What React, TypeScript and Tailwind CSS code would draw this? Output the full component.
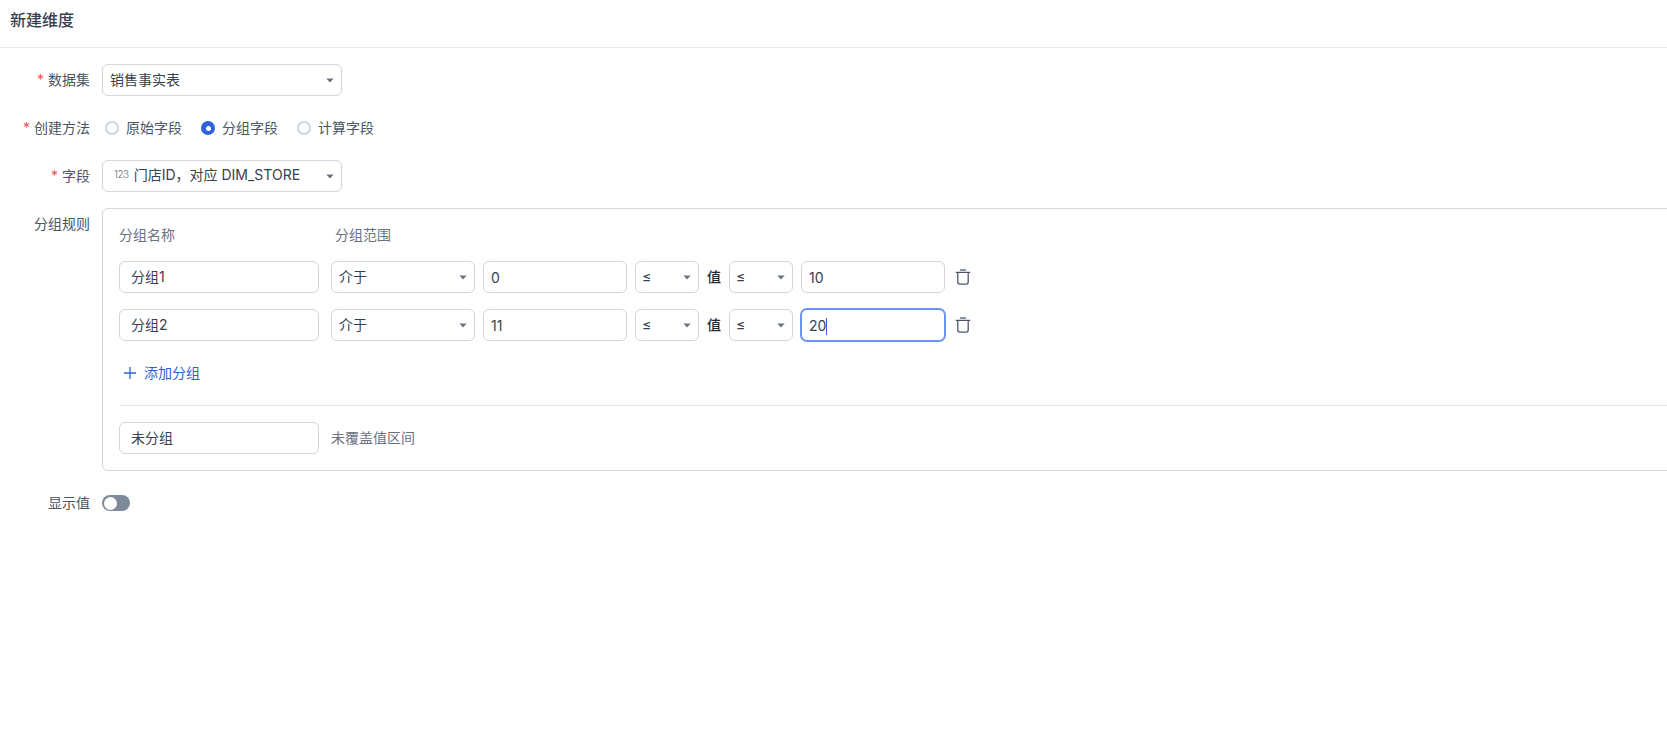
import React from "react";

const font = "font-['Inter','Noto_Sans_CJK_SC',sans-serif]";

function Caret() {
  return (
    <svg width="8" height="5" viewBox="0 0 8 5" className="shrink-0">
      <path d="M0.3 0.5 H7.7 L4 4.5 Z" fill="#6b7280" />
    </svg>
  );
}

function Select({ w, children }: { w: string; children: React.ReactNode }) {
  return (
    <div className={`${w} h-8 shrink-0 flex items-center justify-between pl-[7px] pr-[7px] bg-white border border-[#cfd6e0] rounded-md text-sm text-[#374151]`}>
      <span className="flex items-center min-w-0">{children}</span>
      <Caret />
    </div>
  );
}

function Input({ value, w, pad, focus, numeric }: { value: string; w: string; pad: string; focus?: boolean; numeric?: boolean }) {
  return (
    <div
      className={`${w} ${pad} ${numeric ? "pt-0.5" : ""} h-8 shrink-0 flex items-center bg-white rounded-md text-sm text-[#374151] border ${
        focus ? "border-[#6b93f5] ring-1 ring-[#6b93f5]" : "border-[#cfd6e0]"
      }`}
    >
      {value}
      {focus && <span className="w-px h-[17px] bg-[#3b5bdb]" />}
    </div>
  );
}

function Label({ required, children }: { required?: boolean; children: React.ReactNode }) {
  return (
    <div className="w-[90px] shrink-0 h-8 flex items-center justify-end text-sm text-[#4b5563]">
      {required && <span className="text-[#f05252] mr-1">*</span>}
      {children}
    </div>
  );
}

function Radio({ label, checked }: { label: string; checked?: boolean }) {
  return (
    <div className="flex items-center gap-[7px] mr-[19px]">
      {checked ? (
        <span className="w-3.5 h-3.5 rounded-full bg-[#2f62d8] flex items-center justify-center">
          <span className="w-[5px] h-[5px] rounded-full bg-white" />
        </span>
      ) : (
        <span className="w-3.5 h-3.5 rounded-full border-2 border-[#cfd6e0] bg-white" />
      )}
      <span className="text-sm text-[#4b5563]">{label}</span>
    </div>
  );
}

function Trash() {
  return (
    <svg width="16" height="16" viewBox="0 0 16 16" fill="none" stroke="#4b5563" strokeWidth="1.25" className="ml-2.5 shrink-0">
      <path d="M0.8 3.4 H15.2" />
      <path d="M5 1 H11" />
      <path d="M2.8 3.4 V13 a2 2 0 0 0 2 2 H11.2 a2 2 0 0 0 2 -2 V3.4" />
    </svg>
  );
}

function Rule({ name, a, b, focus }: { name: string; a: string; b: string; focus?: boolean }) {
  return (
    <div className="flex items-center">
      <Input value={name} w="w-[200px]" pad="pl-[11px]" />
      <div className="w-3 shrink-0" />
      <Select w="w-[144px]">介于</Select>
      <div className="flex items-center gap-2 ml-2">
        <Input value={a} w="w-[144px]" pad="pl-[7px]" numeric />
        <Select w="w-16"><span className="-ml-px">≤</span></Select>
        <span className="text-sm font-medium text-[#1f2937]">值</span>
        <Select w="w-16"><span className="-ml-px">≤</span></Select>
        <Input value={b} w="w-[144px]" pad="pl-[7px]" focus={focus} numeric />
      </div>
      <Trash />
    </div>
  );
}

export default function App() {
  return (
    <div className={`${font} w-full h-[748px] overflow-hidden bg-white`}>
      <div className="h-12 flex items-center pl-2.5 pb-2 border-b border-[#e5e7eb] text-base font-medium text-[#374151]">
        新建维度
      </div>
      <div className="flex flex-col gap-4 pt-4">
        <div className="flex gap-3">
          <Label required>数据集</Label>
          <Select w="w-[240px]">销售事实表</Select>
        </div>
        <div className="flex gap-3">
          <Label required>创建方法</Label>
          <div className="flex items-center pl-[3px]">
            <Radio label="原始字段" />
            <Radio label="分组字段" checked />
            <Radio label="计算字段" />
          </div>
        </div>
        <div className="flex gap-3">
          <Label required>字段</Label>
          <Select w="w-[240px]">
            <span className="text-[10px] text-[#6b7280] ml-1 mr-[5px] -mt-1 tracking-[-0.5px] font-light">123</span>
            <span className="-mt-0.5">门店ID，对应 DIM_STORE</span>
          </Select>
        </div>
        <div className="flex gap-3 items-start">
          <Label>分组规则</Label>
          <div className="w-[1600px] shrink-0 h-[263px] border border-[#cfd6e0] rounded-md px-4 pt-4 bg-white">
            <div className="flex h-[19px] items-center text-sm text-[#6b7280]">
              <span className="w-[216px]">分组名称</span>
              <span>分组范围</span>
            </div>
            <div className="flex flex-col gap-4 mt-[17px]">
              <Rule name="分组1" a="0" b="10" />
              <Rule name="分组2" a="11" b="20" focus />
            </div>
            <div className="h-8 mt-4 flex items-center pl-[3px] gap-1.5 text-sm text-[#2f62d8]">
              <svg width="16" height="16" viewBox="0 0 16 16" fill="none" stroke="#2f62d8" strokeWidth="1.3">
                <path d="M8 2 V14 M2 8 H14" />
              </svg>
              添加分组
            </div>
            <div className="border-t border-[#e5e7eb] mt-4" />
            <div className="flex items-center gap-3 mt-4">
              <Input value="未分组" w="w-[200px]" pad="pl-[11px]" />
              <span className="text-sm text-[#6b7280]">未覆盖值区间</span>
            </div>
          </div>
        </div>
        <div className="flex gap-3 items-center">
          <Label>显示值</Label>
          <div className="w-7 h-4 rounded-full bg-[#7d8a9b] flex items-center pl-0.5">
            <span className="w-[13px] h-[13px] rounded-full bg-white" />
          </div>
        </div>
      </div>
    </div>
  );
}
